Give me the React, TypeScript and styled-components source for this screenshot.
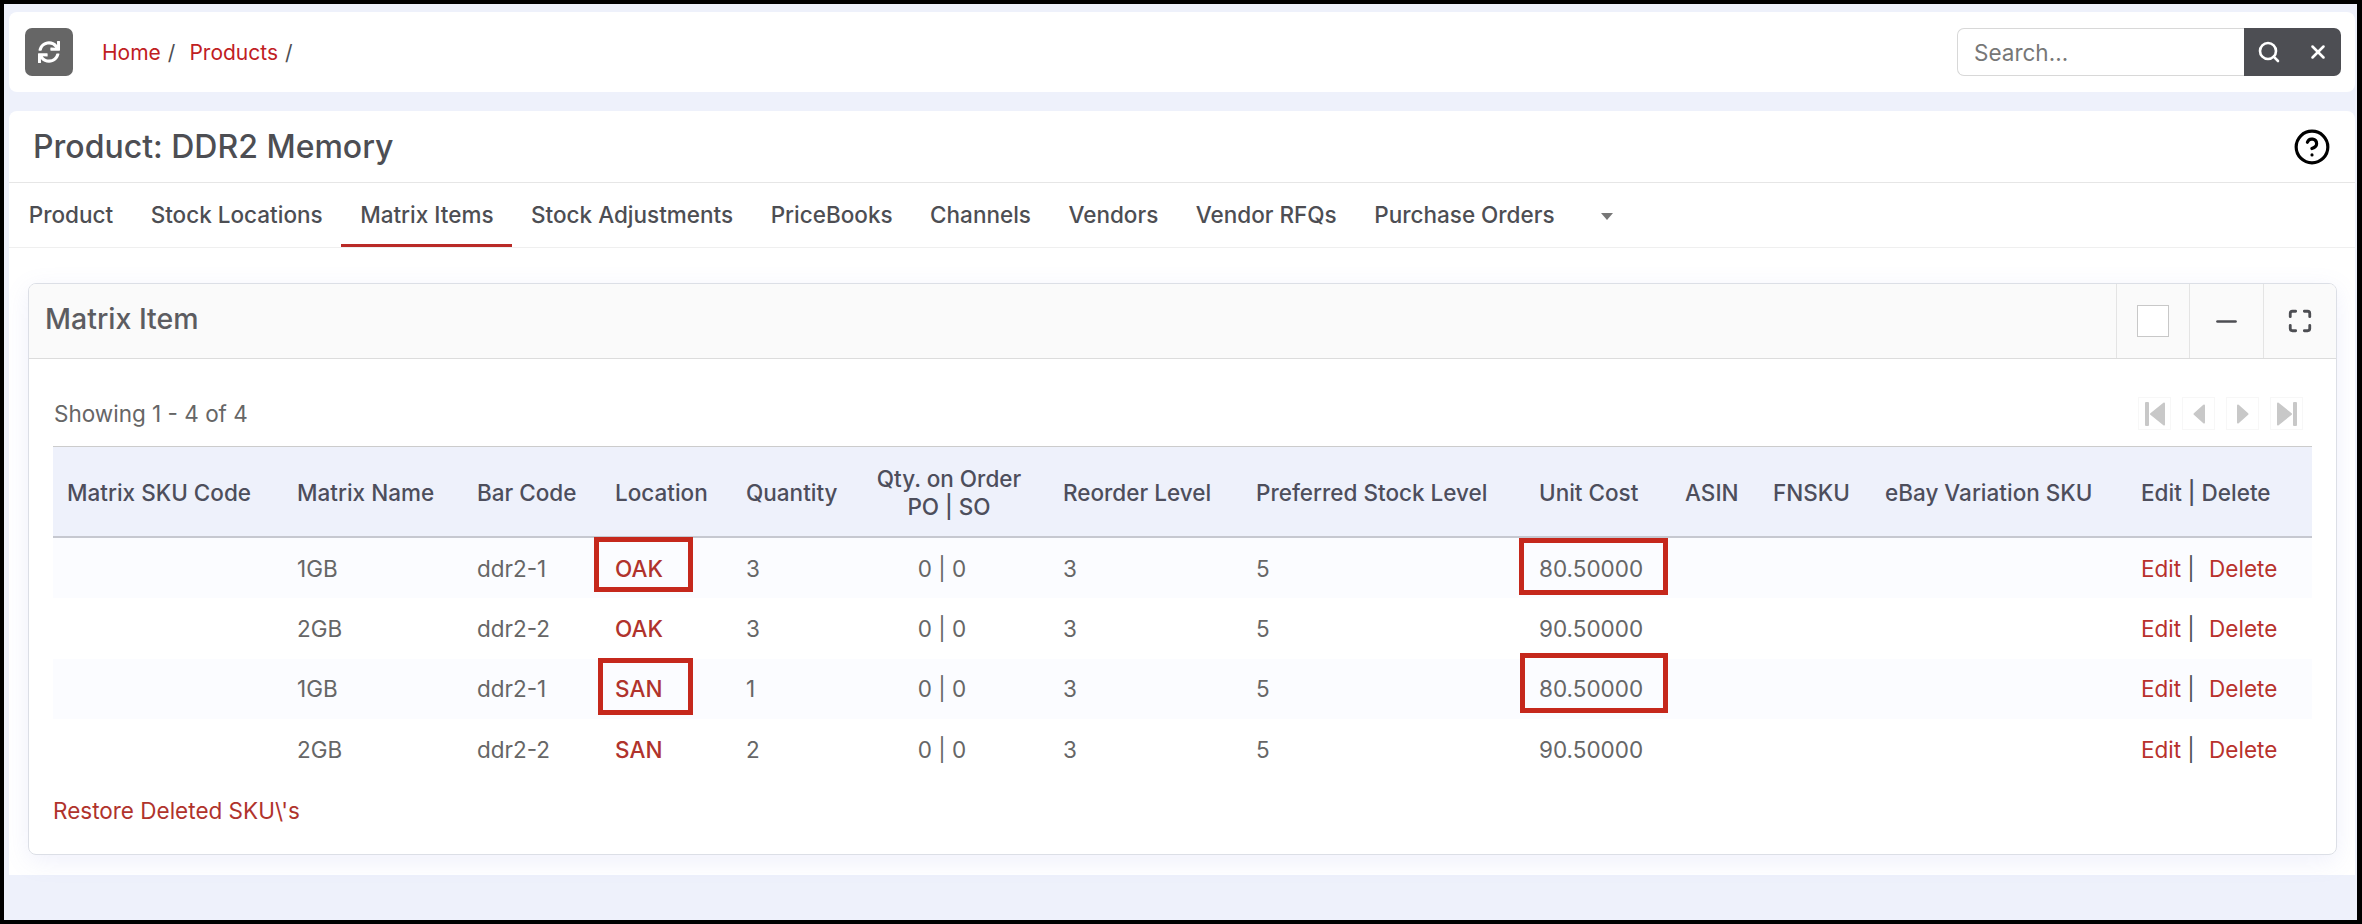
import React, {FunctionComponent} from 'react';
import styled, {createGlobalStyle} from 'styled-components';
import {FaSync} from 'react-icons/fa';
import {CircleHelp, Maximize, Minus, Search, X} from 'lucide-react';

const GlobalStyle = createGlobalStyle`
    html, body {
        margin: 0;
        padding: 0;
        background: #000;
    }
    * {
        box-sizing: border-box;
    }
`;

const Frame = styled.div`
    width: 2362px;
    height: 924px;
    border-style: solid;
    border-color: #000;
    border-width: 4px 5px 4px 4px;
    background: #eef1fb;
    padding: 8px 2px 0 5px;
    font-family: Inter, "Liberation Sans", sans-serif;
    font-size: 22.5px;
    color: #666;
    display: flex;
    flex-direction: column;
    gap: 19px;
    overflow: hidden;
`;

const TopBar = styled.header`
    height: 80px;
    background: #fff;
    border-radius: 8px;
    padding: 16px 14px 0 16px;
    display: flex;
    justify-content: space-between;
    align-items: flex-start;
`;

const LeftGroup = styled.div`
    display: flex;
    align-items: center;
    height: 48px;
`;

const RefreshButton = styled.button`
    width: 48px;
    height: 48px;
    background: #666;
    color: #fff;
    border: none;
    border-radius: 7px;
    padding: 0;
    display: flex;
    align-items: center;
    justify-content: center;
    margin-right: 29px;
`;

const Crumbs = styled.nav`
    display: flex;
    font-size: 21px;
    color: #4d4e53;
`;

const Crumb = styled.a`
    color: #c0201f;
    margin-right: 7px;
`;

const CrumbSep = styled.span`
    margin-right: 14px;
`;

const SearchBox = styled.div`
    display: flex;
    height: 48px;
    width: 384px;
`;

const SearchInput = styled.input`
    width: 287px;
    height: 48px;
    border: 1px solid #d8d8d8;
    border-right: none;
    border-radius: 7px 0 0 7px;
    padding: 0 16px;
    font-family: inherit;
    font-size: 22.5px;
    color: #666;
    outline: none;

    &::placeholder {
        color: #777;
        opacity: 1;
    }
`;

const SearchButtons = styled.div`
    width: 97px;
    background: #4d4e53;
    border-radius: 0 7px 7px 0;
    color: #fff;
    display: flex;
    align-items: center;
    padding-left: 13px;
    gap: 26px;
`;

const Content = styled.main`
    flex: none;
    height: 764px;
    background: #fff;
    border-radius: 8px 8px 0 0;
    display: flex;
    flex-direction: column;
`;

const TitleRow = styled.div`
    height: 72px;
    flex: none;
    padding: 0 24px 0 24px;
    border-bottom: 1px solid #e6e6e6;
    display: flex;
    align-items: center;
    justify-content: space-between;
    color: #000;
`;

const Title = styled.h1`
    margin: 0;
    font-size: 32px;
    font-weight: 500;
    color: #4d4e53;
`;

const Tabs = styled.nav`
    height: 65px;
    flex: none;
    padding: 0 0 0 1px;
    border-bottom: 1px solid #efefef;
    display: flex;
    align-items: stretch;
`;

const Tab = styled.a<{$active?: boolean}>`
    padding: 2px 18.75px 0;
    display: flex;
    align-items: center;
    font-weight: 500;
    font-size: 22.5px;
    color: #4d4e53;
    border-bottom: 3px solid ${props => props.$active ? '#b92a27' : 'transparent'};
    white-space: nowrap;
`;

const Caret = styled.span`
    width: 0;
    height: 0;
    margin: 3px 0 0 28px;
    align-self: center;
    border-style: solid;
    border-width: 7px 6px 0 6px;
    border-color: #777 transparent transparent transparent;
`;

const PanelArea = styled.section`
    flex: 1;
    padding: 35px 18px 20px 19px;
    display: flex;
`;

const Panel = styled.div`
    flex: 1;
    border: 1px solid #dcdfe6;
    border-radius: 8px;
    box-shadow: 0 6px 24px rgba(120, 135, 225, 0.12);
    display: flex;
    flex-direction: column;
    overflow: hidden;
`;

const PanelHead = styled.div`
    height: 75px;
    flex: none;
    background: #fafafa;
    border-bottom: 1px solid #dcdcdc;
    display: flex;
    justify-content: space-between;
    padding-left: 16px;
`;

const PanelTitle = styled.h2`
    margin: 0;
    align-self: center;
    padding-bottom: 5px;
    font-size: 28.5px;
    font-weight: 500;
    color: #5c5c61;
`;

const PanelTools = styled.div`
    display: flex;
`;

const Tool = styled.div<{$w: number}>`
    width: ${props => props.$w}px;
    border-left: 1px solid #e4e4e4;
    display: flex;
    align-items: center;
    justify-content: center;
    color: #4d4e53;
`;

const SelectBox = styled.input`
    appearance: none;
    width: 32px;
    height: 32px;
    margin: 0;
    background: #fff;
    border: 1px solid #c8c8c8;
`;

const PanelBody = styled.div`
    flex: 1;
    padding: 0 24px;
`;

const Toolbar = styled.div`
    height: 87px;
    padding: 22px 9px 0 1px;
    display: flex;
    align-items: center;
    justify-content: space-between;
`;

const Pager = styled.div`
    display: flex;
    gap: 11px;
`;

const PagerButton = styled.span`
    width: 33px;
    height: 33px;
    border: 1px solid #f7f7f7;
    display: flex;
    align-items: center;
    justify-content: center;
    color: #c8c8c8;
`;

const Table = styled.table`
    width: 100%;
    table-layout: fixed;
    border-collapse: separate;
    border-spacing: 0;
`;

const Col = styled.col<{$w: number}>`
    width: ${props => props.$w}px;
`;

const HeadCell = styled.th<{$center?: boolean}>`
    height: 92px;
    padding: 2px 14px 0;
    background: #eef1fb;
    border-top: 1px solid #ccc;
    border-bottom: 2px solid #c6c8d0;
    text-align: ${props => props.$center ? 'center' : 'left'};
    font-weight: 500;
    font-size: 22.5px;
    line-height: 28px;
    color: #4d4e5c;
    white-space: nowrap;
`;

const Row = styled.tr<{$striped: boolean}>`
    background: ${props => props.$striped ? '#fbfcff' : '#fff'};
`;

const Cell = styled.td`
    position: relative;
    height: 60.3px;
    padding: 0 14px;
    white-space: nowrap;
`;

const QtyCell = styled(Cell)`
    text-align: center;
    padding-right: 28px;
`;

const LocationLink = styled.a`
    color: #b0332c;
    font-weight: 500;
`;

const ActionLink = styled.a`
    color: #b8312c;
`;

const Pipe = styled.span`
    color: #4d4e53;
    margin: 0 14.5px 0 6px;
`;

const Highlight = styled.span<{$l: number; $t: number; $w: number; $h: number}>`
    position: absolute;
    left: ${props => props.$l}px;
    top: ${props => props.$t}px;
    width: ${props => props.$w}px;
    height: ${props => props.$h}px;
    border: 5px solid #c5281c;
`;

const Restore = styled.a`
    display: block;
    margin-top: 18px;
    line-height: 28px;
    color: #b0332c;
`;

type Box = {l: number; t: number; w: number; h: number};

type MatrixRow = {
    name: string;
    bar: string;
    location: string;
    quantity: number;
    cost: string;
    locationBox?: Box;
    costBox?: Box;
};

const rows: MatrixRow[] = [
    {name: '1GB', bar: 'ddr2-1', location: 'OAK', quantity: 3, cost: '80.50000', locationBox: {l: -7, t: -1, w: 99, h: 55}, costBox: {l: -6, t: 0, w: 149, h: 57}},
    {name: '2GB', bar: 'ddr2-2', location: 'OAK', quantity: 3, cost: '90.50000'},
    {name: '1GB', bar: 'ddr2-1', location: 'SAN', quantity: 1, cost: '80.50000', locationBox: {l: -3, t: -1, w: 95, h: 57}, costBox: {l: -5, t: -6, w: 148, h: 60}},
    {name: '2GB', bar: 'ddr2-2', location: 'SAN', quantity: 2, cost: '90.50000'},
];

const widths = [230, 180, 138, 131, 117, 200, 193, 283, 146, 88, 112, 256, 185];

const headers = ['Matrix SKU Code', 'Matrix Name', 'Bar Code', 'Location', 'Quantity'];
const headersAfter = ['Reorder Level', 'Preferred Stock Level', 'Unit Cost', 'ASIN', 'FNSKU', 'eBay Variation SKU', 'Edit | Delete'];

const tabs = ['Product', 'Stock Locations', 'Matrix Items', 'Stock Adjustments', 'PriceBooks', 'Channels', 'Vendors', 'Vendor RFQs', 'Purchase Orders'];

const PagerFirst = () => (
    <svg width="20" height="24" viewBox="0 0 20 24" fill="currentColor">
        <rect x="0" y="0" width="4" height="24" rx="1"/>
        <path d="M19 1.5 L6 12 L19 22.5 Z" stroke="currentColor" strokeWidth="2" strokeLinejoin="round"/>
    </svg>
);

const PagerPrev = () => (
    <svg width="12" height="20" viewBox="0 0 12 20" fill="currentColor">
        <path d="M11 1.5 L1.5 10 L11 18.5 Z" stroke="currentColor" strokeWidth="2" strokeLinejoin="round"/>
    </svg>
);

const PagerNext = () => (
    <svg width="12" height="20" viewBox="0 0 12 20" fill="currentColor">
        <path d="M1 1.5 L10.5 10 L1 18.5 Z" stroke="currentColor" strokeWidth="2" strokeLinejoin="round"/>
    </svg>
);

const PagerLast = () => (
    <svg width="20" height="24" viewBox="0 0 20 24" fill="currentColor">
        <path d="M1 1.5 L14 12 L1 22.5 Z" stroke="currentColor" strokeWidth="2" strokeLinejoin="round"/>
        <rect x="16" y="0" width="4" height="24" rx="1"/>
    </svg>
);

const App: FunctionComponent = () => {
    return (
        <Frame>
            <GlobalStyle/>
            <TopBar>
                <LeftGroup>
                    <RefreshButton><FaSync size={22}/></RefreshButton>
                    <Crumbs>
                        <Crumb>Home</Crumb><CrumbSep>/</CrumbSep>
                        <Crumb>Products</Crumb><CrumbSep>/</CrumbSep>
                    </Crumbs>
                </LeftGroup>
                <SearchBox>
                    <SearchInput type="text" placeholder="Search..."/>
                    <SearchButtons>
                        <Search size={24} strokeWidth={2.6}/>
                        <X size={22} strokeWidth={2.8}/>
                    </SearchButtons>
                </SearchBox>
            </TopBar>
            <Content>
                <TitleRow>
                    <Title>Product: DDR2 Memory</Title>
                    <CircleHelp size={38} strokeWidth={2}/>
                </TitleRow>
                <Tabs>
                    {tabs.map(tab => <Tab key={tab} $active={tab === 'Matrix Items'}>{tab}</Tab>)}
                    <Caret/>
                </Tabs>
                <PanelArea>
                    <Panel>
                        <PanelHead>
                            <PanelTitle>Matrix Item</PanelTitle>
                            <PanelTools>
                                <Tool $w={73}><SelectBox type="checkbox" readOnly/></Tool>
                                <Tool $w={74}><Minus size={31} strokeWidth={2}/></Tool>
                                <Tool $w={73}><Maximize size={26} strokeWidth={2.6}/></Tool>
                            </PanelTools>
                        </PanelHead>
                        <PanelBody>
                            <Toolbar>
                                <span>Showing 1 - 4 of 4</span>
                                <Pager>
                                    <PagerButton><PagerFirst/></PagerButton>
                                    <PagerButton><PagerPrev/></PagerButton>
                                    <PagerButton><PagerNext/></PagerButton>
                                    <PagerButton><PagerLast/></PagerButton>
                                </Pager>
                            </Toolbar>
                            <Table>
                                <colgroup>
                                    {widths.map((w, i) => <Col key={i} $w={w}/>)}
                                </colgroup>
                                <thead>
                                    <tr>
                                        {headers.map(h => <HeadCell key={h}>{h}</HeadCell>)}
                                        <HeadCell $center>Qty. on Order<br/>PO | SO</HeadCell>
                                        {headersAfter.map(h => <HeadCell key={h}>{h}</HeadCell>)}
                                    </tr>
                                </thead>
                                <tbody>
                                    {rows.map((row, i) => (
                                        <Row key={i} $striped={i % 2 === 0}>
                                            <Cell/>
                                            <Cell>{row.name}</Cell>
                                            <Cell>{row.bar}</Cell>
                                            <Cell>
                                                <LocationLink>{row.location}</LocationLink>
                                                {row.locationBox ? <Highlight $l={row.locationBox.l} $t={row.locationBox.t} $w={row.locationBox.w} $h={row.locationBox.h}/> : ''}
                                            </Cell>
                                            <Cell>{row.quantity}</Cell>
                                            <QtyCell>0 | 0</QtyCell>
                                            <Cell>3</Cell>
                                            <Cell>5</Cell>
                                            <Cell>
                                                {row.cost}
                                                {row.costBox ? <Highlight $l={row.costBox.l} $t={row.costBox.t} $w={row.costBox.w} $h={row.costBox.h}/> : ''}
                                            </Cell>
                                            <Cell/>
                                            <Cell/>
                                            <Cell/>
                                            <Cell>
                                                <ActionLink>Edit</ActionLink>
                                                <Pipe>|</Pipe>
                                                <ActionLink>Delete</ActionLink>
                                            </Cell>
                                        </Row>
                                    ))}
                                </tbody>
                            </Table>
                            <Restore>Restore Deleted SKU\'s</Restore>
                        </PanelBody>
                    </Panel>
                </PanelArea>
            </Content>
        </Frame>
    );
};

export default App;
